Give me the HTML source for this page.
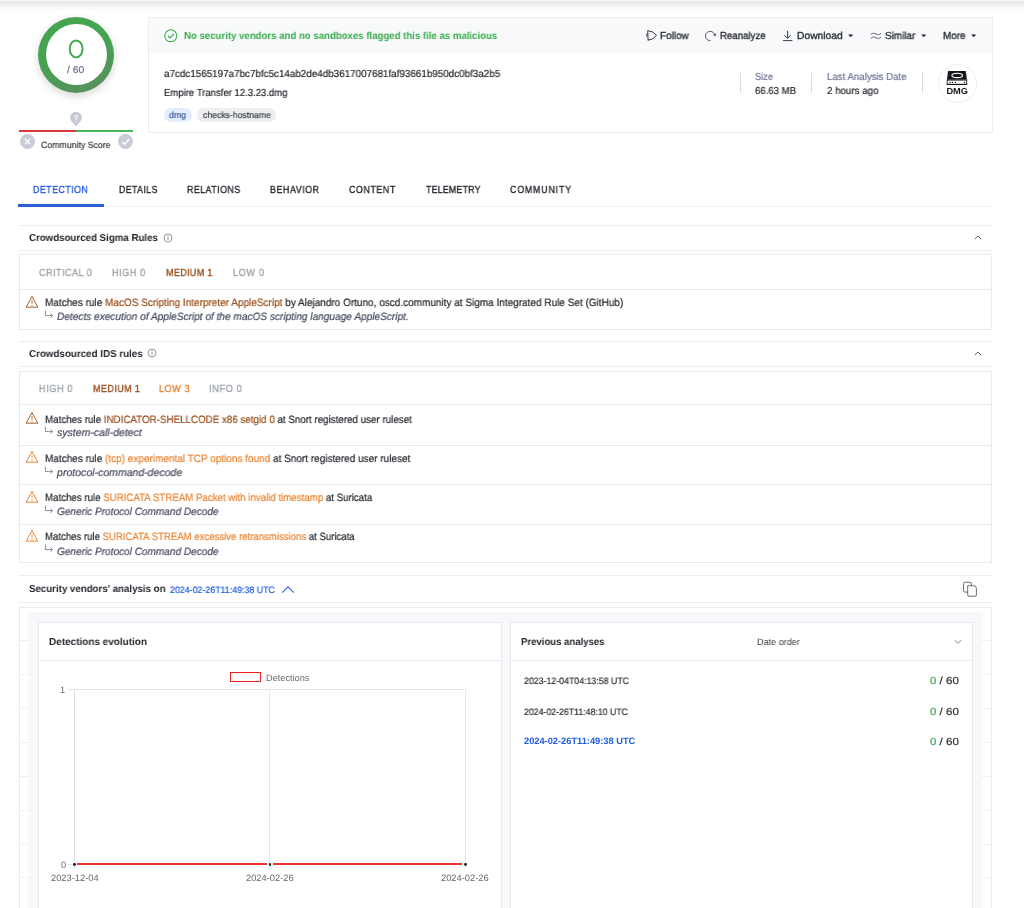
<!DOCTYPE html>
<html><head><meta charset="utf-8"><style>
html,body{margin:0;padding:0;background:#fff;width:1024px;height:908px;overflow:hidden;position:relative}
.t{position:absolute;white-space:pre;line-height:1;font-family:"Liberation Sans", sans-serif;transform-origin:0 0;text-rendering:geometricPrecision;will-change:transform}
.a{position:absolute;box-sizing:border-box}
</style></head><body>
<!-- top shadow -->
<div class="a" style="left:0;top:0;width:1024px;height:11px;background:linear-gradient(#f7f8f9 0px,#e6e8ea 2.5px,#eeeff0 4px,#f8f8f9 7px,#fff 11px)"></div>

<!-- score circle -->
<div class="a" style="left:37.9px;top:16.8px;width:76.2px;height:76.2px;border-radius:50%;background:linear-gradient(160deg,#44a651 0%,#46a251 45%,#5a8e5e 100%);box-shadow:0 3px 9px rgba(0,0,0,0.16)"></div>
<div class="a" style="left:45.5px;top:24.4px;width:61px;height:61px;border-radius:50%;background:#fff"></div>

<svg class="a" style="left:60px;top:33px" width="32" height="32" viewBox="0 0 32 32">
  <ellipse cx="16.15" cy="15.9" rx="6.45" ry="8.45" fill="none" stroke="#3aac4c" stroke-width="1.9"/>
</svg>
<!-- community score -->
<svg class="a" style="left:68px;top:110px" width="16" height="18" viewBox="0 0 16 18">
  <path d="M8 2 C4.6 2 2.2 4.4 2.2 7.5 C2.2 10.6 5.5 13.5 8 16.2 C10.5 13.5 13.8 10.6 13.8 7.5 C13.8 4.4 11.4 2 8 2 Z" fill="#c5c9d4"/>
  <path d="M6.5 7.2 Q6.5 5.2 8 5.2 Q9.5 5.2 9.5 6.8 Q9.5 7.8 8.1 8.6 Q7.9 8.8 7.9 9.4 V10.1" fill="none" stroke="#fff" stroke-width="1.1"/><circle cx="7.9" cy="11.6" r="0.65" fill="#fff"/>
</svg>
<div class="a" style="left:18.8px;top:130px;width:57.2px;height:2.2px;background:#d9393a"></div>
<div class="a" style="left:76px;top:130px;width:57px;height:2.2px;background:#49b85a"></div>
<svg class="a" style="left:19px;top:133px" width="17" height="17" viewBox="0 0 17 17">
  <circle cx="8.5" cy="8.5" r="7.5" fill="#c8ccd7"/>
  <path d="M5.8 5.8 L11.2 11.2 M11.2 5.8 L5.8 11.2" stroke="#fff" stroke-width="1.3"/>
</svg>
<svg class="a" style="left:116.6px;top:133px" width="17" height="17" viewBox="0 0 17 17">
  <circle cx="8.5" cy="8.5" r="7.5" fill="#c8ccd7"/>
  <path d="M5 8.7 L7.6 11.2 L12.2 6" stroke="#fff" stroke-width="1.3" fill="none"/>
</svg>

<!-- header card -->
<div class="a" style="left:148px;top:17px;width:845px;height:116px;border:1px solid #eaecf0;background:#fff"></div>
<div class="a" style="left:149px;top:18px;width:843px;height:35px;background:#f8f9fb"></div>
<svg class="a" style="left:164px;top:28.5px" width="14" height="14" viewBox="0 0 14 14">
  <circle cx="6.8" cy="6.8" r="6" fill="none" stroke="#3cae4f" stroke-width="1.1"/>
  <path d="M4 7 L6 9 L9.8 5" fill="none" stroke="#3cae4f" stroke-width="1.1"/>
</svg>
<!-- follow icon -->
<svg class="a" style="left:642px;top:27px" width="20" height="16" viewBox="0 0 20 16">
  <path d="M5.9 3.7 Q11 3.9 14.6 8.4 Q11 12.9 5.9 13.2" fill="none" stroke="#33363c" stroke-width="1"/>
  <path d="M5.7 3.5 L6.1 13.4" fill="none" stroke="#33363c" stroke-width="1"/>
  <path d="M5.4 6.3 Q3.4 8.2 5.4 10.1" fill="none" stroke="#33363c" stroke-width="0.9"/>
  <path d="M7.4 6.2 Q6.6 7 7 7.8" fill="none" stroke="#aaa" stroke-width="0.6"/>
</svg>
<!-- reanalyze icon -->
<svg class="a" style="left:705px;top:30px" width="12" height="12" viewBox="0 0 12 12">
  <path d="M5.6 10.4 A4.5 4.5 0 1 1 9.2 4.3" fill="none" stroke="#44474d" stroke-width="0.9"/>
  <path d="M8.2 4.9 L10.9 3.6 L10.5 6.2 Z" fill="#25282e"/>
</svg>
<!-- download icon -->
<svg class="a" style="left:782px;top:30px" width="12" height="12" viewBox="0 0 12 12">
  <path d="M5.6 0.8 V8.2 M2.4 5.2 L5.6 8.4 L8.8 5.2 M1 10.6 H10.4" fill="none" stroke="#3a3d44" stroke-width="1"/>
</svg>
<!-- similar icon -->
<svg class="a" style="left:870px;top:31px" width="12" height="10" viewBox="0 0 12 10">
  <path d="M0.8 3.4 C2.6 1.9 4.2 1.9 6 3 S9.4 3.6 11 2.4 M0.8 7.2 C2.6 5.7 4.2 5.7 6 6.8 S9.4 7.4 11 6.2" fill="none" stroke="#3a3d44" stroke-width="0.8"/>
</svg>
<!-- carets -->
<svg class="a" style="left:847.9px;top:33.6px" width="6" height="4" viewBox="0 0 6 4"><path d="M0.2 0.5 H5.2 L2.7 3.2 Z" fill="#25282e"/></svg>
<svg class="a" style="left:920.8px;top:33.6px" width="6" height="4" viewBox="0 0 6 4"><path d="M0.2 0.5 H5.2 L2.7 3.2 Z" fill="#25282e"/></svg>
<svg class="a" style="left:970.9px;top:33.6px" width="6" height="4" viewBox="0 0 6 4"><path d="M0.2 0.5 H5.2 L2.7 3.2 Z" fill="#25282e"/></svg>
<!-- dividers -->
<div class="a" style="left:739.6px;top:73px;width:1px;height:20px;background:#d8dbe1"></div>
<div class="a" style="left:810.8px;top:73px;width:1px;height:20px;background:#d8dbe1"></div>
<div class="a" style="left:921.6px;top:73px;width:1px;height:20px;background:#d8dbe1"></div>
<!-- dmg circle -->
<div class="a" style="left:937.5px;top:63.5px;width:39px;height:39px;border-radius:50%;border:1px solid #eceef2;background:#fff"></div>
<svg class="a" style="left:935px;top:60px;will-change:transform" width="45" height="45" viewBox="0 0 45 45">
  <path d="M13.1 10.9 H30.7 L32 19.7 H11.9 Z" fill="#15171c"/>
  <ellipse cx="22.2" cy="15.45" rx="5.3" ry="2.2" fill="none" stroke="#fff" stroke-width="1.1"/>
  <rect x="12.2" y="20.1" width="19.5" height="4.4" fill="#fff" stroke="#15171c" stroke-width="0.9"/>
  <rect x="11.8" y="23.8" width="20.3" height="1.1" fill="#15171c"/>
  <rect x="14.4" y="21.8" width="1.2" height="1.2" fill="#15171c"/><rect x="16.8" y="21.8" width="1.2" height="1.2" fill="#15171c"/><rect x="19.8" y="21.8" width="1.2" height="1.2" fill="#15171c"/><rect x="28.9" y="21.8" width="1.2" height="1.2" fill="#15171c"/>
  <text x="22.2" y="34" font-family="Liberation Sans" font-size="9.5" font-weight="bold" fill="#15171c" text-anchor="middle" textLength="21.6" lengthAdjust="spacingAndGlyphs">DMG</text>
</svg>
<!-- tags -->
<div class="a" style="left:163.8px;top:107.8px;width:28.1px;height:14.4px;border-radius:7.2px;background:#e2eefc"></div>
<div class="a" style="left:196.9px;top:107.8px;width:79.3px;height:14.4px;border-radius:7.2px;background:#eceef1"></div>

<!-- tabs -->
<div class="a" style="left:18.4px;top:206px;width:974px;height:1px;background:#eef0f3"></div>
<div class="a" style="left:18.4px;top:204.2px;width:85.4px;height:2.4px;background:#2f5fd6"></div>

<!-- sigma section -->
<div class="a" style="left:18.8px;top:224.5px;width:973.7px;height:1px;background:#eceef2"></div>
<div class="a" style="left:18.8px;top:250px;width:973.7px;height:1px;background:#eceef2"></div>
<div class="a" style="left:18.8px;top:254px;width:973.7px;height:75.8px;border:1px solid #e8eaef"></div>
<div class="a" style="left:18.8px;top:289.2px;width:973.7px;height:1px;background:#e8eaef"></div>
<svg class="a" style="left:972px;top:233px" width="12" height="8" viewBox="0 0 12 8">
  <path d="M2.8 6.2 L6 3 L9.2 6.2" fill="none" stroke="#5d6067" stroke-width="1"/>
</svg>
<svg class="a" style="left:161.5px;top:231.6px" width="12" height="12" viewBox="0 0 12 12">
  <circle cx="6" cy="6" r="4" fill="none" stroke="#777b83" stroke-width="0.75"/>
  <path d="M6 5.1 V8.3" stroke="#777b83" stroke-width="0.8"/><circle cx="6" cy="3.75" r="0.5" fill="#777b83"/>
</svg>

<!-- ids section -->
<div class="a" style="left:18.8px;top:341.2px;width:973.7px;height:1px;background:#eceef2"></div>
<div class="a" style="left:18.8px;top:365.8px;width:973.7px;height:1px;background:#eceef2"></div>
<div class="a" style="left:18.8px;top:370.6px;width:973.7px;height:192.8px;border:1px solid #e8eaef"></div>
<div class="a" style="left:18.8px;top:404.4px;width:973.7px;height:1px;background:#e8eaef"></div>
<div class="a" style="left:18.8px;top:444.8px;width:973.7px;height:1px;background:#e8eaef"></div>
<div class="a" style="left:18.8px;top:484.1px;width:973.7px;height:1px;background:#e8eaef"></div>
<div class="a" style="left:18.8px;top:523.6px;width:973.7px;height:1px;background:#e8eaef"></div>
<svg class="a" style="left:972px;top:349.2px" width="12" height="8" viewBox="0 0 12 8">
  <path d="M2.8 6.2 L6 3 L9.2 6.2" fill="none" stroke="#5d6067" stroke-width="1"/>
</svg>
<svg class="a" style="left:146.2px;top:347.3px" width="12" height="12" viewBox="0 0 12 12">
  <circle cx="6" cy="6" r="4" fill="none" stroke="#777b83" stroke-width="0.75"/>
  <path d="M6 5.1 V8.3" stroke="#777b83" stroke-width="0.8"/><circle cx="6" cy="3.75" r="0.5" fill="#777b83"/>
</svg>
<svg class="a" style="left:25px;top:295.0px" width="14" height="14" viewBox="0 0 14 14">
  <path d="M7 1.5 L12.8 12.2 H1.2 Z" fill="none" stroke-width="0.95" stroke="#a1541f" stroke-linejoin="round"/>
  <path d="M7 5.2 V8.8" stroke-width="0.9" stroke="#a1541f"/><circle cx="7" cy="10.4" r="0.55" fill="#a1541f"/>
</svg>
<svg class="a" style="left:25px;top:411.0px" width="14" height="14" viewBox="0 0 14 14">
  <path d="M7 1.5 L12.8 12.2 H1.2 Z" fill="none" stroke-width="0.95" stroke="#a1541f" stroke-linejoin="round"/>
  <path d="M7 5.2 V8.8" stroke-width="0.9" stroke="#a1541f"/><circle cx="7" cy="10.4" r="0.55" fill="#a1541f"/>
</svg>
<svg class="a" style="left:25px;top:450.4px" width="14" height="14" viewBox="0 0 14 14">
  <path d="M7 1.5 L12.8 12.2 H1.2 Z" fill="none" stroke-width="0.95" stroke="#e8822e" stroke-linejoin="round"/>
  <path d="M7 5.2 V8.8" stroke-width="0.9" stroke="#e8822e"/><circle cx="7" cy="10.4" r="0.55" fill="#e8822e"/>
</svg>
<svg class="a" style="left:25px;top:489.5px" width="14" height="14" viewBox="0 0 14 14">
  <path d="M7 1.5 L12.8 12.2 H1.2 Z" fill="none" stroke-width="0.95" stroke="#e8822e" stroke-linejoin="round"/>
  <path d="M7 5.2 V8.8" stroke-width="0.9" stroke="#e8822e"/><circle cx="7" cy="10.4" r="0.55" fill="#e8822e"/>
</svg>
<svg class="a" style="left:25px;top:529.0px" width="14" height="14" viewBox="0 0 14 14">
  <path d="M7 1.5 L12.8 12.2 H1.2 Z" fill="none" stroke-width="0.95" stroke="#e8822e" stroke-linejoin="round"/>
  <path d="M7 5.2 V8.8" stroke-width="0.9" stroke="#e8822e"/><circle cx="7" cy="10.4" r="0.55" fill="#e8822e"/>
</svg>
<svg class="a" style="left:44px;top:310.0px" width="10" height="9" viewBox="0 0 10 9">
  <path d="M1.4 0.5 V5.6 H8.4 M6.4 3.6 L8.6 5.6 L6.4 7.6" fill="none" stroke="#6a6e78" stroke-width="0.8"/>
</svg>
<svg class="a" style="left:44px;top:426.3px" width="10" height="9" viewBox="0 0 10 9">
  <path d="M1.4 0.5 V5.6 H8.4 M6.4 3.6 L8.6 5.6 L6.4 7.6" fill="none" stroke="#6a6e78" stroke-width="0.8"/>
</svg>
<svg class="a" style="left:44px;top:465.6px" width="10" height="9" viewBox="0 0 10 9">
  <path d="M1.4 0.5 V5.6 H8.4 M6.4 3.6 L8.6 5.6 L6.4 7.6" fill="none" stroke="#6a6e78" stroke-width="0.8"/>
</svg>
<svg class="a" style="left:44px;top:504.8px" width="10" height="9" viewBox="0 0 10 9">
  <path d="M1.4 0.5 V5.6 H8.4 M6.4 3.6 L8.6 5.6 L6.4 7.6" fill="none" stroke="#6a6e78" stroke-width="0.8"/>
</svg>
<svg class="a" style="left:44px;top:544.3px" width="10" height="9" viewBox="0 0 10 9">
  <path d="M1.4 0.5 V5.6 H8.4 M6.4 3.6 L8.6 5.6 L6.4 7.6" fill="none" stroke="#6a6e78" stroke-width="0.8"/>
</svg>
<!-- security vendors -->
<div class="a" style="left:18.8px;top:575px;width:973.7px;height:1px;background:#eceef2"></div>
<div class="a" style="left:18.8px;top:601.8px;width:973.7px;height:1px;background:#eceef2"></div>
<svg class="a" style="left:280px;top:584px" width="16" height="10" viewBox="0 0 16 10">
  <path d="M2.2 8.6 L8 2.8 L13.8 8.6" fill="none" stroke="#3464d8" stroke-width="1.1"/>
</svg>
<svg class="a" style="left:961px;top:580px" width="18" height="18" viewBox="0 0 18 18">
  <path d="M6.7 12.1 H3.8 Q2.6 12.1 2.6 10.9 V3.4 Q2.6 2.2 3.8 2.2 H8.6 Q10.4 2.2 10.4 4 V5.7" fill="none" stroke="#656b7d" stroke-width="1"/>
  <path d="M6.7 5.7 H12.6 Q15.4 5.7 15.4 8.5 V15 Q15.4 16.2 14.2 16.2 H7.9 Q6.7 16.2 6.7 15 Z" fill="none" stroke="#656b7d" stroke-width="1"/>
</svg>
<div class="a" style="left:18.8px;top:607px;width:973.7px;height:320px;border:1px solid #e8eaef;background:#fff"></div>
<div class="a" style="left:19px;top:640.3px;width:972.5px;height:1px;background:#eef0f3"></div>
<div class="a" style="left:19px;top:674.2px;width:972.5px;height:1px;background:#eef0f3"></div>
<div class="a" style="left:19px;top:708.0px;width:972.5px;height:1px;background:#eef0f3"></div>
<div class="a" style="left:19px;top:741.9px;width:972.5px;height:1px;background:#eef0f3"></div>
<div class="a" style="left:19px;top:775.7px;width:972.5px;height:1px;background:#eef0f3"></div>
<div class="a" style="left:19px;top:809.6px;width:972.5px;height:1px;background:#eef0f3"></div>
<div class="a" style="left:19px;top:843.5px;width:972.5px;height:1px;background:#eef0f3"></div>
<div class="a" style="left:19px;top:877.3px;width:972.5px;height:1px;background:#eef0f3"></div>
<div class="a" style="left:28.8px;top:612.9px;width:953.2px;height:320px;background:#f7f8fa;box-shadow:0 0 1.5px rgba(0,0,0,0.09)"></div>
<div class="a" style="left:38px;top:622.3px;width:463.5px;height:320px;border:1px solid #e5e8ee;background:#fff"></div>
<div class="a" style="left:38px;top:660.4px;width:463.5px;height:1px;background:#e9ebf0"></div>
<div class="a" style="left:509.6px;top:622.3px;width:463.5px;height:320px;border:1px solid #e5e8ee;background:#fff"></div>
<div class="a" style="left:509.6px;top:660.4px;width:463.5px;height:1px;background:#e9ebf0"></div>
<svg class="a" style="left:952px;top:637px" width="12" height="9" viewBox="0 0 12 9">
  <path d="M2.6 3 L6 6.4 L9.4 3" fill="none" stroke="#7a7d85" stroke-width="0.9"/>
</svg>
<!-- chart -->
<div class="a" style="left:229.7px;top:672px;width:31.7px;height:10px;border:1.2px solid #ee2020"></div>
<div class="a" style="left:74px;top:688.6px;width:391.5px;height:1px;background:#e4e4e4"></div>
<div class="a" style="left:74px;top:689px;width:1px;height:180px;background:#e0e0e0"></div>
<div class="a" style="left:269.4px;top:689px;width:1px;height:180px;background:#e8e8e8"></div>
<div class="a" style="left:465px;top:689px;width:1px;height:180px;background:#e8e8e8"></div>
<div class="a" style="left:68px;top:863.6px;width:6px;height:1px;background:#e4e4e4"></div>
<div class="a" style="left:68px;top:688.6px;width:6px;height:1px;background:#e4e4e4"></div>
<div class="a" style="left:77.2px;top:863.4px;width:189.6px;height:1.6px;background:#ef3535"></div><div class="a" style="left:272.8px;top:863.4px;width:189.4px;height:1.6px;background:#ef3535"></div>
<div class="a" style="left:73px;top:862.8px;width:2.8px;height:2.8px;border-radius:50%;background:#222"></div>
<div class="a" style="left:268.6px;top:862.8px;width:2.8px;height:2.8px;border-radius:50%;background:#222"></div>
<div class="a" style="left:464px;top:862.8px;width:2.8px;height:2.8px;border-radius:50%;background:#222"></div>

<div class="t" style="left:183.90px;top:31.90px;font-size:10.09px;font-weight:bold;font-style:normal;color:#38ac4c;transform:scaleX(0.9545)">No security vendors and no sandboxes flagged this file as malicious</div>
<div class="t" style="left:660.00px;top:31.90px;font-size:10.2px;font-weight:normal;font-style:normal;color:#2e3137;-webkit-text-stroke-width:0.35px;transform:scaleX(0.9778)">Follow</div>
<div class="t" style="left:720.00px;top:31.90px;font-size:10.2px;font-weight:normal;font-style:normal;color:#2e3137;-webkit-text-stroke-width:0.35px;transform:scaleX(0.9472)">Reanalyze</div>
<div class="t" style="left:796.50px;top:31.90px;font-size:10.2px;font-weight:normal;font-style:normal;color:#2e3137;-webkit-text-stroke-width:0.35px;transform:scaleX(1.0108)">Download</div>
<div class="t" style="left:884.60px;top:31.90px;font-size:10.2px;font-weight:normal;font-style:normal;color:#2e3137;-webkit-text-stroke-width:0.35px;transform:scaleX(0.9730)">Similar</div>
<div class="t" style="left:942.50px;top:31.90px;font-size:10.2px;font-weight:normal;font-style:normal;color:#2e3137;-webkit-text-stroke-width:0.35px;transform:scaleX(0.9690)">More</div>
<div class="t" style="left:163.70px;top:70.30px;font-size:10.2px;font-weight:normal;font-style:normal;color:#24272d;-webkit-text-stroke-width:0.2px;transform:scaleX(0.9665)">a7cdc1565197a7bc7bfc5c14ab2de4db3617007681faf93661b950dc0bf3a2b5</div>
<div class="t" style="left:163.70px;top:89.20px;font-size:10.2px;font-weight:normal;font-style:normal;color:#24272d;-webkit-text-stroke-width:0.2px;transform:scaleX(0.9360)">Empire Transfer 12.3.23.dmg</div>
<div class="t" style="left:169.30px;top:111.00px;font-size:8.86px;font-weight:normal;font-style:normal;color:#3d5a96;-webkit-text-stroke-width:0.2px;transform:scaleX(0.9873)">dmg</div>
<div class="t" style="left:202.70px;top:111.00px;font-size:8.86px;font-weight:normal;font-style:normal;color:#3a3d44;-webkit-text-stroke-width:0.2px;transform:scaleX(0.9782)">checks-hostname</div>
<div class="t" style="left:755.00px;top:72.60px;font-size:10.2px;font-weight:normal;font-style:normal;color:#6d7396;-webkit-text-stroke-width:0.2px;transform:scaleX(0.9078)">Size</div>
<div class="t" style="left:755.00px;top:86.80px;font-size:10.09px;font-weight:normal;font-style:normal;color:#24272d;-webkit-text-stroke-width:0.2px;transform:scaleX(0.9504)">66.63 MB</div>
<div class="t" style="left:826.50px;top:72.60px;font-size:10.2px;font-weight:normal;font-style:normal;color:#6d7396;-webkit-text-stroke-width:0.2px;transform:scaleX(0.9485)">Last Analysis Date</div>
<div class="t" style="left:826.50px;top:86.80px;font-size:10.09px;font-weight:normal;font-style:normal;color:#24272d;-webkit-text-stroke-width:0.2px;transform:scaleX(0.9674)">2 hours ago</div>
<div class="t" style="left:41.00px;top:141.00px;font-size:9.06px;font-weight:normal;font-style:normal;color:#3a3d44;-webkit-text-stroke-width:0.2px;transform:scaleX(0.9679)">Community Score</div>
<div class="t" style="left:67.15px;top:66.30px;font-size:9.89px;font-weight:normal;font-style:normal;color:#6b7194;-webkit-text-stroke-width:0.2px;transform:scaleX(1.0495)">/ 60</div>
<div class="t" style="left:33.40px;top:186.20px;font-size:10.3px;font-weight:normal;font-style:normal;color:#2158de;-webkit-text-stroke-width:0.35px;letter-spacing:0.521px;transform:scaleX(0.8600)">DETECTION</div>
<div class="t" style="left:118.75px;top:186.20px;font-size:10.3px;font-weight:normal;font-style:normal;color:#24272d;-webkit-text-stroke-width:0.35px;letter-spacing:0.406px;transform:scaleX(0.8600)">DETAILS</div>
<div class="t" style="left:187.00px;top:186.20px;font-size:10.3px;font-weight:normal;font-style:normal;color:#24272d;-webkit-text-stroke-width:0.35px;letter-spacing:0.524px;transform:scaleX(0.8600)">RELATIONS</div>
<div class="t" style="left:270.00px;top:186.20px;font-size:10.3px;font-weight:normal;font-style:normal;color:#24272d;-webkit-text-stroke-width:0.35px;letter-spacing:0.653px;transform:scaleX(0.8600)">BEHAVIOR</div>
<div class="t" style="left:349.40px;top:186.20px;font-size:10.3px;font-weight:normal;font-style:normal;color:#24272d;-webkit-text-stroke-width:0.35px;letter-spacing:0.665px;transform:scaleX(0.8600)">CONTENT</div>
<div class="t" style="left:426.00px;top:186.20px;font-size:10.3px;font-weight:normal;font-style:normal;color:#24272d;-webkit-text-stroke-width:0.35px;letter-spacing:0.209px;transform:scaleX(0.8600)">TELEMETRY</div>
<div class="t" style="left:510.30px;top:186.20px;font-size:10.3px;font-weight:normal;font-style:normal;color:#24272d;-webkit-text-stroke-width:0.35px;letter-spacing:0.942px;transform:scaleX(0.8600)">COMMUNITY</div>
<div class="t" style="left:28.75px;top:234.30px;font-size:10.09px;font-weight:bold;font-style:normal;color:#24272d;transform:scaleX(0.9626)">Crowdsourced Sigma Rules</div>
<div class="t" style="left:39.30px;top:269.00px;font-size:10.3px;font-weight:normal;font-style:normal;color:#9ea3ab;-webkit-text-stroke-width:0.35px;letter-spacing:0.544px;transform:scaleX(0.8800)">CRITICAL 0</div>
<div class="t" style="left:112.40px;top:269.00px;font-size:10.3px;font-weight:normal;font-style:normal;color:#9ea3ab;-webkit-text-stroke-width:0.35px;letter-spacing:0.659px;transform:scaleX(0.8800)">HIGH 0</div>
<div class="t" style="left:166.40px;top:269.00px;font-size:10.3px;font-weight:normal;font-style:normal;color:#9a4f1d;-webkit-text-stroke-width:0.35px;letter-spacing:0.341px;transform:scaleX(0.8800)">MEDIUM 1</div>
<div class="t" style="left:232.70px;top:269.00px;font-size:10.3px;font-weight:normal;font-style:normal;color:#9ea3ab;-webkit-text-stroke-width:0.35px;letter-spacing:0.772px;transform:scaleX(0.8800)">LOW 0</div>
<div class="t" style="left:44.50px;top:297.90px;font-size:10.59px;font-weight:normal;font-style:normal;color:#24272d;-webkit-text-stroke-width:0.2px;transform:scaleX(0.9457)">Matches rule <span style="color:#9a4f1d">MacOS Scripting Interpreter AppleScript</span> by Alejandro Ortuno, oscd.community at Sigma Integrated Rule Set (GitHub)</div>
<div class="t" style="left:57.00px;top:311.70px;font-size:10.59px;font-weight:normal;font-style:italic;color:#464c5e;-webkit-text-stroke-width:0.2px;transform:scaleX(0.9546)">Detects execution of AppleScript of the macOS scripting language AppleScript.</div>
<div class="t" style="left:28.75px;top:350.30px;font-size:10.09px;font-weight:bold;font-style:normal;color:#24272d;transform:scaleX(0.9714)">Crowdsourced IDS rules</div>
<div class="t" style="left:39.30px;top:385.40px;font-size:10.3px;font-weight:normal;font-style:normal;color:#9ea3ab;-webkit-text-stroke-width:0.35px;letter-spacing:0.734px;transform:scaleX(0.8800)">HIGH 0</div>
<div class="t" style="left:92.70px;top:385.40px;font-size:10.3px;font-weight:normal;font-style:normal;color:#9a4f1d;-webkit-text-stroke-width:0.35px;letter-spacing:0.426px;transform:scaleX(0.8800)">MEDIUM 1</div>
<div class="t" style="left:159.30px;top:385.40px;font-size:10.3px;font-weight:normal;font-style:normal;color:#ea8533;-webkit-text-stroke-width:0.35px;letter-spacing:0.647px;transform:scaleX(0.8800)">LOW 3</div>
<div class="t" style="left:209.00px;top:385.40px;font-size:10.3px;font-weight:normal;font-style:normal;color:#9ea3ab;-webkit-text-stroke-width:0.35px;letter-spacing:0.832px;transform:scaleX(0.8800)">INFO 0</div>
<div class="t" style="left:44.50px;top:414.50px;font-size:10.59px;font-weight:normal;font-style:normal;color:#24272d;-webkit-text-stroke-width:0.2px;transform:scaleX(0.9252)">Matches rule <span style="color:#9a4f1d">INDICATOR-SHELLCODE x86 setgid 0</span> at Snort registered user ruleset</div>
<div class="t" style="left:57.00px;top:428.20px;font-size:10.59px;font-weight:normal;font-style:italic;color:#464c5e;-webkit-text-stroke-width:0.2px;transform:scaleX(0.9935)">system-call-detect</div>
<div class="t" style="left:44.50px;top:453.80px;font-size:10.59px;font-weight:normal;font-style:normal;color:#24272d;-webkit-text-stroke-width:0.2px;transform:scaleX(0.9451)">Matches rule <span style="color:#ea8533">(tcp) experimental TCP options found</span> at Snort registered user ruleset</div>
<div class="t" style="left:57.00px;top:467.50px;font-size:10.59px;font-weight:normal;font-style:italic;color:#464c5e;-webkit-text-stroke-width:0.2px;transform:scaleX(0.9950)">protocol-command-decode</div>
<div class="t" style="left:44.50px;top:492.90px;font-size:10.59px;font-weight:normal;font-style:normal;color:#24272d;-webkit-text-stroke-width:0.2px;transform:scaleX(0.9164)">Matches rule <span style="color:#ea8533">SURICATA STREAM Packet with invalid timestamp</span> at Suricata</div>
<div class="t" style="left:57.00px;top:506.70px;font-size:10.59px;font-weight:normal;font-style:italic;color:#464c5e;-webkit-text-stroke-width:0.2px;transform:scaleX(0.9504)">Generic Protocol Command Decode</div>
<div class="t" style="left:44.50px;top:532.30px;font-size:10.59px;font-weight:normal;font-style:normal;color:#24272d;-webkit-text-stroke-width:0.2px;transform:scaleX(0.9059)">Matches rule <span style="color:#ea8533">SURICATA STREAM excessive retransmissions</span> at Suricata</div>
<div class="t" style="left:57.00px;top:546.50px;font-size:10.59px;font-weight:normal;font-style:italic;color:#464c5e;-webkit-text-stroke-width:0.2px;transform:scaleX(0.9504)">Generic Protocol Command Decode</div>
<div class="t" style="left:28.75px;top:585.30px;font-size:10.09px;font-weight:bold;font-style:normal;color:#24272d;transform:scaleX(0.9621)">Security vendors' analysis on</div>
<div class="t" style="left:169.70px;top:586.00px;font-size:9.27px;font-weight:normal;font-style:normal;color:#1c5ce3;-webkit-text-stroke-width:0.2px;transform:scaleX(0.9531)">2024-02-26T11:49:38 UTC</div>
<div class="t" style="left:48.70px;top:637.90px;font-size:10.09px;font-weight:bold;font-style:normal;color:#24272d;transform:scaleX(0.9887)">Detections evolution</div>
<div class="t" style="left:520.50px;top:638.00px;font-size:10.09px;font-weight:bold;font-style:normal;color:#24272d;transform:scaleX(0.9492)">Previous analyses</div>
<div class="t" style="left:757.10px;top:638.20px;font-size:9.2px;font-weight:normal;font-style:normal;color:#33363c;transform:scaleX(0.9834)">Date order</div>
<div class="t" style="left:524.00px;top:677.20px;font-size:9.27px;font-weight:normal;font-style:normal;color:#2b2e34;-webkit-text-stroke-width:0.2px;transform:scaleX(0.9481)">2023-12-04T04:13:58 UTC</div>
<div class="t" style="left:929.70px;top:677.20px;font-size:10.2px;font-weight:normal;font-style:normal;color:#2b2e34;-webkit-text-stroke-width:0.2px;transform:scaleX(1.1294)"><span style="color:#38ac4c">0</span> / 60</div>
<div class="t" style="left:524.00px;top:707.50px;font-size:9.27px;font-weight:normal;font-style:normal;color:#2b2e34;-webkit-text-stroke-width:0.2px;transform:scaleX(0.9449)">2024-02-26T11:48:10 UTC</div>
<div class="t" style="left:929.70px;top:707.50px;font-size:10.2px;font-weight:normal;font-style:normal;color:#2b2e34;-webkit-text-stroke-width:0.2px;transform:scaleX(1.1294)"><span style="color:#38ac4c">0</span> / 60</div>
<div class="t" style="left:524.00px;top:737.10px;font-size:9.27px;font-weight:bold;font-style:normal;color:#1c5ce3">2024-02-26T11:49:38 UTC</div>
<div class="t" style="left:929.70px;top:737.80px;font-size:10.2px;font-weight:normal;font-style:normal;color:#2b2e34;-webkit-text-stroke-width:0.2px;transform:scaleX(1.1294)"><span style="color:#38ac4c">0</span> / 60</div>
<div class="t" style="left:265.50px;top:674.00px;font-size:9.2px;font-weight:normal;font-style:normal;color:#666;transform:scaleX(0.9972)">Detections</div>
<div class="t" style="left:59.67px;top:685.50px;font-size:9.2px;font-weight:normal;font-style:normal;color:#666">1</div>
<div class="t" style="left:60.67px;top:861.00px;font-size:9.2px;font-weight:normal;font-style:normal;color:#666">0</div>
<div class="t" style="left:50.50px;top:874.30px;font-size:9.2px;font-weight:normal;font-style:normal;color:#666;transform:scaleX(1.0128)">2023-12-04</div>
<div class="t" style="left:245.80px;top:874.30px;font-size:9.2px;font-weight:normal;font-style:normal;color:#666;transform:scaleX(1.0128)">2024-02-26</div>
<div class="t" style="left:441.10px;top:874.30px;font-size:9.2px;font-weight:normal;font-style:normal;color:#666;transform:scaleX(1.0128)">2024-02-26</div>
</body></html>
